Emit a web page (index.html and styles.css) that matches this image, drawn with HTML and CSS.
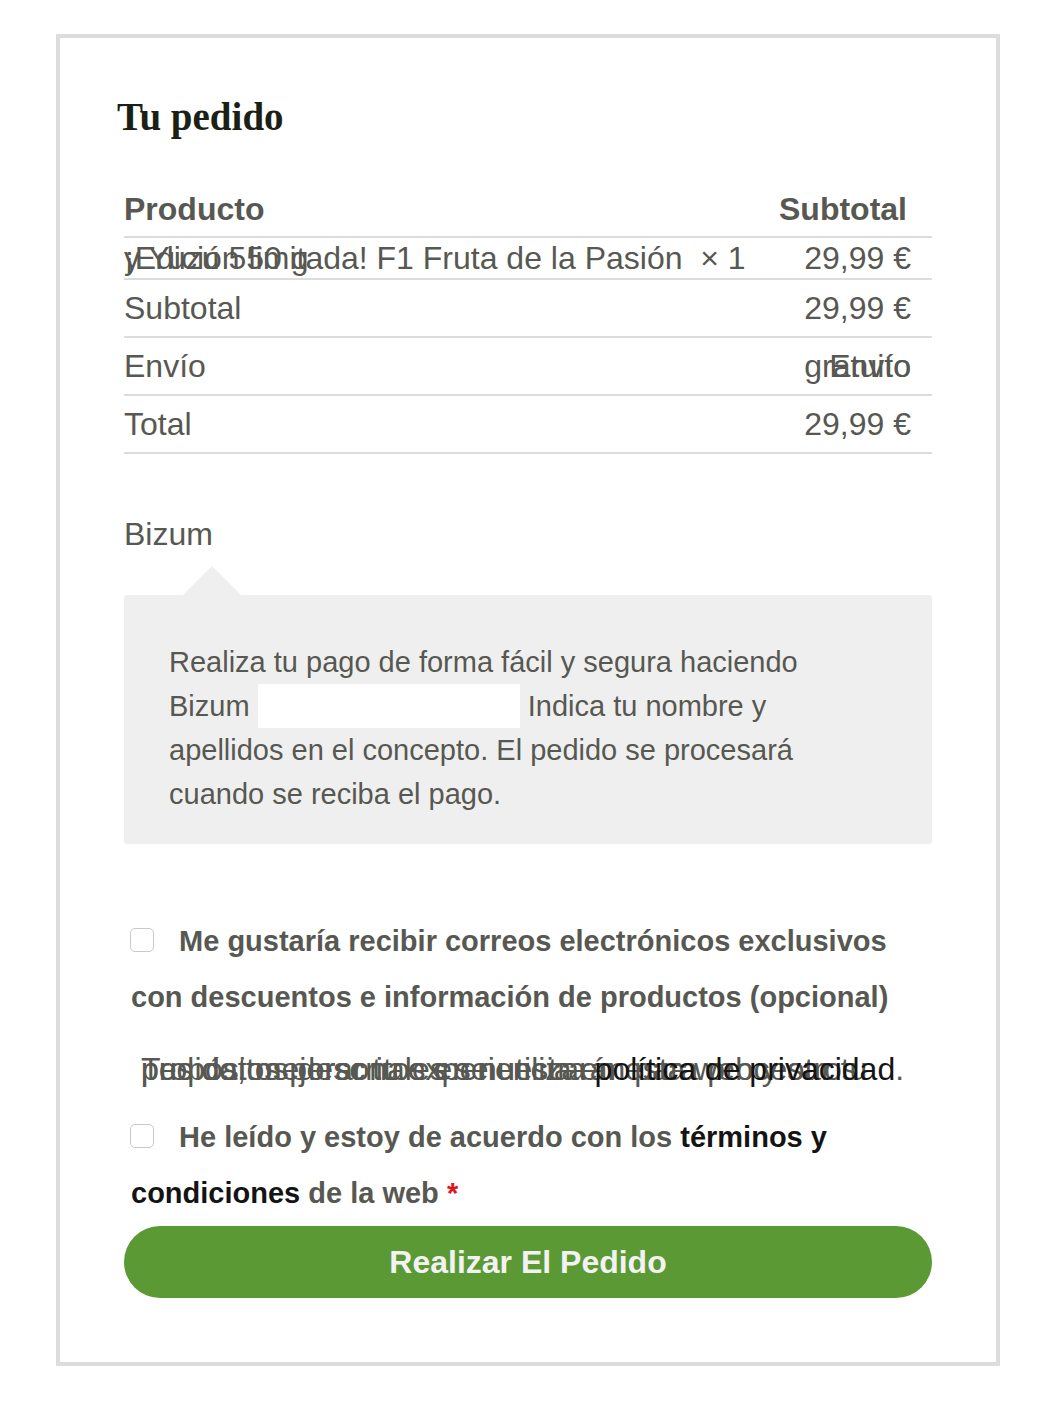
FILE: index.html
```html
<!DOCTYPE html>
<html lang="es">
<head>
  <meta charset="UTF-8">
  <meta name="viewport" content="width=device-width, initial-scale=1.0">
  <title>Tu pedido</title>
  <link rel="stylesheet" href="styles.css">
</head>
<body>
  <div class="checkout">
    <h3 class="title">Tu pedido</h3>

    <table class="review">
      <thead>
        <tr>
          <th>Producto</th>
          <th class="num">Subtotal</th>
        </tr>
      </thead>
      <tbody>
        <tr class="item">
          <td>
            <span class="stack">
              <span>¡Edición limitada! F1 Fruta de la Pasión &nbsp;× 1</span>
              <span>y Yuzu 550 g</span>
            </span>
          </td>
          <td class="num">29,99 €</td>
        </tr>
      </tbody>
      <tfoot>
        <tr>
          <td>Subtotal</td>
          <td class="num">29,99 €</td>
        </tr>
        <tr>
          <td>Envío</td>
          <td class="num">
            <span class="stack stack-end">
              <span>Envío</span>
              <span>gratuito</span>
            </span>
          </td>
        </tr>
        <tr>
          <td>Total</td>
          <td class="num">29,99 €</td>
        </tr>
      </tfoot>
    </table>

    <div class="payment">
      <label class="method">Bizum</label>
      <div class="payment-box">
        <p>Realiza tu pago de forma fácil y segura haciendo Bizum <span class="redacted"></span> Indica tu nombre y apellidos en el concepto. El pedido se procesará cuando se reciba el pago.</p>
      </div>
    </div>

    <label class="consent">
      <input type="checkbox"> Me gustaría recibir correos electrónicos exclusivos con descuentos e información de productos (opcional)
    </label>

    <p class="privacy">
      <span>Tus datos personales se utilizarán para procesar tu</span>
      <span>pedido, mejorar tu experiencia en esta web y otros</span>
      <span>propósitos descritos en nuestra <a href="#">política de privacidad</a>.</span>
    </p>

    <label class="consent terms">
      <input type="checkbox"> He leído y estoy de acuerdo con los <a href="#">términos y condiciones</a> de la web <abbr class="required" title="obligatorio">*</abbr>
    </label>

    <button class="place-order" type="button">Realizar El Pedido</button>
  </div>
</body>
</html>
```

FILE: styles.css
```css
body {
  margin: 0;
  font-family: "Liberation Sans", Arial, sans-serif;
  color: #575852;
  background: #fff;
}

.checkout {
  box-sizing: border-box;
  width: 944px;
  margin: 34px 0 0 56px;
  border: 4px solid #dcdcdc;
  padding: 56px 64px 64px;
}

.title {
  margin: 0 0 0 -7px;
  font-family: "Liberation Serif", "Times New Roman", serif;
  font-size: 39px;
  line-height: 46px;
  font-weight: 700;
  color: #1b1f16;
}

.review {
  width: 100%;
  margin-top: 51px;
  border-collapse: separate;
  border-spacing: 0;
  font-size: 32px;
}

.review th,
.review td {
  box-sizing: border-box;
  padding: 0;
  line-height: 36px;
  text-align: left;
  vertical-align: middle;
  border-bottom: 2px solid #dcdcdc;
}

.review th {
  height: 47px;
  padding-bottom: 9px;
  font-weight: 700;
}

.review td {
  height: 58px;
}

.review .item td {
  height: 42px;
}

.review .num {
  width: 160px;
  padding-right: 21px;
  text-align: right;
  white-space: nowrap;
}

.review th.num {
  padding-right: 25px;
}

.stack {
  display: grid;
}

.stack > span {
  grid-area: 1 / 1;
}

.stack-end {
  justify-items: end;
}

.payment {
  margin-top: 62px;
}

.method {
  display: block;
  font-size: 32px;
  line-height: 36px;
}

.payment-box {
  position: relative;
  margin-top: 43px;
  padding: 45px 72px 28px 45px;
  background: #efefef;
  border-radius: 3px;
  font-size: 29px;
  line-height: 44px;
}

.payment-box::before {
  content: "";
  position: absolute;
  top: -29px;
  left: 59px;
  border-style: solid;
  border-width: 0 29px 29px;
  border-color: transparent transparent #efefef;
}

.payment-box p {
  margin: 0;
}

.redacted {
  display: inline-block;
  width: 262px;
  height: 44px;
  background: #fff;
  vertical-align: top;
}

.consent {
  display: block;
  margin-top: 69px;
  padding-left: 7px;
  font-size: 29px;
  line-height: 56px;
  font-weight: 700;
}

.consent input {
  appearance: none;
  -webkit-appearance: none;
  box-sizing: border-box;
  width: 24px;
  height: 24px;
  margin: 0 17px 0 -1px;
  border: 1px solid #c9c9c9;
  border-radius: 5px;
  background: #fff;
  vertical-align: -1px;
}

.consent a,
.privacy a {
  color: #141414;
  text-decoration: none;
}

.privacy {
  display: grid;
  margin: 26px 0 0;
  padding-left: 17px;
  font-size: 32px;
  line-height: 36px;
}

.privacy > span {
  grid-area: 1 / 1;
}

.terms {
  margin-top: 22px;
}

.required {
  color: #e0141e;
  text-decoration: none;
  border: 0;
}

.place-order {
  display: block;
  width: 100%;
  height: 72px;
  margin-top: 5px;
  border: 0;
  border-radius: 36px;
  background: #5b9935;
  color: #f2f2f2;
  font-family: "Liberation Sans", Arial, sans-serif;
  font-size: 32px;
  font-weight: 700;
}
```
